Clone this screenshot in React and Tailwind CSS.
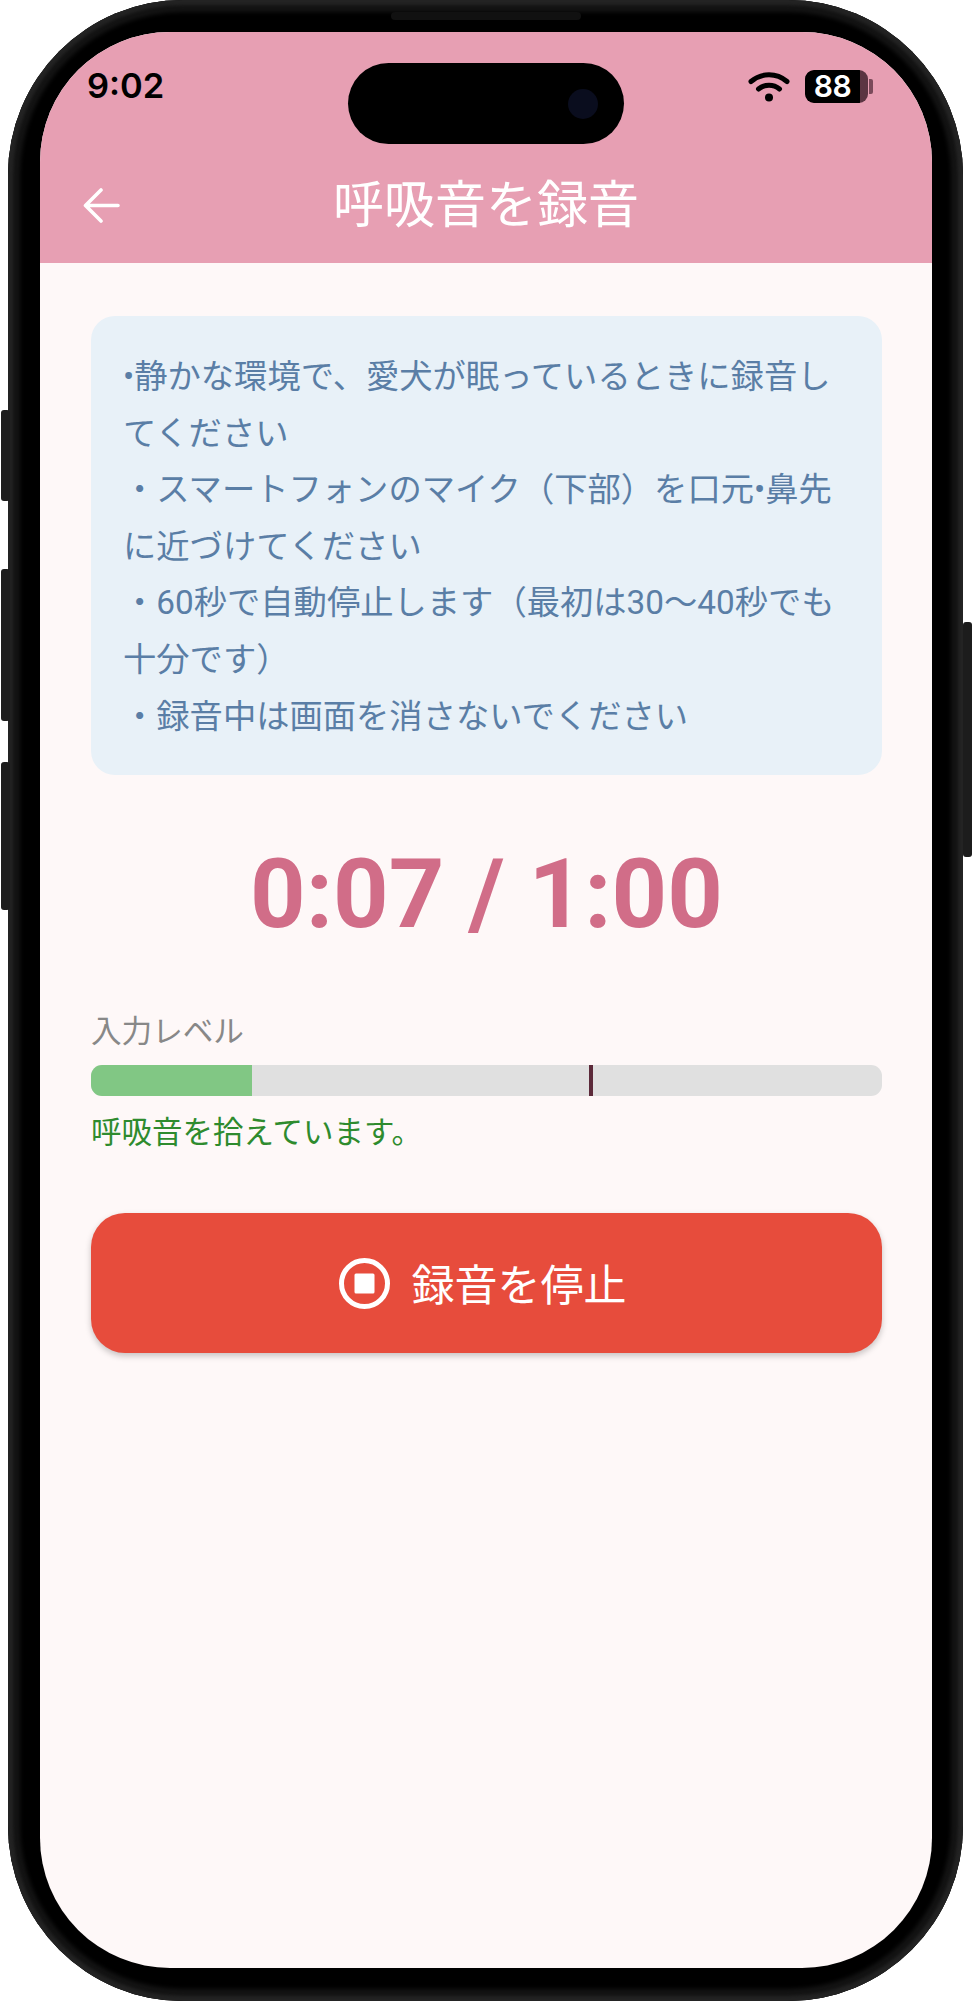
const JP = 'font-["Roboto","Noto_Sans_CJK_JP",sans-serif]';

const TIPS = [
  '•静かな環境で、愛犬が眠っているときに録音してください',
  '・スマートフォンのマイク（下部）を口元•鼻先に近づけてください',
  '・60秒で自動停止します（最初は30～40秒でも十分です）',
  '・録音中は画面を消さないでください',
];

const SideButton = ({ className }) => (
  <div className={`absolute w-[9px] rounded-[3px] bg-[#1c1c1c] ${className}`} />
);

const Wifi = () => (
  <svg width="42" height="31" viewBox="0 0 42 31" fill="none" stroke="#000" strokeLinecap="round">
    <path d="M3 10.5C13.5 1.5 28.5 1.5 39 10.5" strokeWidth="5" />
    <path d="M10.5 18C16.5 13 25.5 13 31.5 18" strokeWidth="5" />
    <circle cx="21" cy="26.5" r="4" fill="#000" stroke="none" />
  </svg>
);

const Battery = () => (
  <div className="flex items-center">
    <div className="flex h-[33px] w-[63px] items-center overflow-hidden rounded-[9px] bg-[#5b3542]">
      <div className="flex h-full w-[55px] items-center justify-center rounded-l-[9px] bg-black font-['Inter',sans-serif] text-[30px] font-semibold leading-none tracking-[-0.5px] text-white">
        88
      </div>
    </div>
    <div className="ml-[1px] h-[15px] w-[4px] rounded-r-[2px] bg-[#7a4a5a]" />
  </div>
);

const BackArrow = () => (
  <svg width="37" height="35" viewBox="0 0 37 35" fill="none" stroke="#fff" strokeWidth="3.6" strokeLinecap="round" strokeLinejoin="round">
    <path d="M35 17.5H3M18 2L2.5 17.5L18 33" />
  </svg>
);

const StopIcon = () => (
  <svg width="51" height="51" viewBox="0 0 51 51" fill="none">
    <circle cx="25.5" cy="25.5" r="23" stroke="#fff" strokeWidth="5" />
    <rect x="15.5" y="15.5" width="20" height="20" rx="1.5" fill="#fff" />
  </svg>
);

export default function App() {
  return (
    <div className={`h-[2003px] w-[973px] overflow-hidden bg-white pl-[8px] ${JP}`}>
      <div className="relative h-[2001px] w-[955px] rounded-[175px] bg-black pt-[32px] pr-[31px] pb-[33px] pl-[32px] shadow-[inset_0_0_3px_5px_#232323,inset_0_0_4px_12px_#141414]">
        <SideButton className="-left-[7px] top-[410px] h-[91px]" />
        <SideButton className="-left-[7px] top-[569px] h-[152px]" />
        <SideButton className="-left-[7px] top-[762px] h-[148px]" />
        <SideButton className="-right-[9px] top-[622px] h-[235px]" />
        <div className="absolute left-[383px] top-[12px] h-[8px] w-[190px] rounded-full bg-[#111]" />

        <div className="relative flex h-[1936px] flex-col overflow-hidden rounded-[130px] bg-[#fef8f8]">
          <div className="absolute left-[308px] top-[31px] flex h-[81px] w-[276px] items-center justify-end rounded-[42px] bg-black pr-[26px]">
            <div className="h-[30px] w-[30px] rounded-full bg-[#0a0d1e]" />
          </div>

          <header className="h-[231px] bg-[#e79fb3] pt-[36px]">
            <div className="flex h-[36px] items-center justify-between pr-[59px] pl-[47px]">
              <span className="font-['Inter',sans-serif] text-[34.5px] font-semibold leading-none text-black">9:02</span>
              <div className="flex items-center gap-[15px]">
                <Wifi />
                <Battery />
              </div>
            </div>
            <div className="mt-[61px] grid h-[80px] grid-cols-[1fr_auto_1fr] items-center">
              <div className="pl-[43px]">
                <BackArrow />
              </div>
              <h1 className="text-[51px] font-normal leading-none text-white">呼吸音を録音</h1>
              <div />
            </div>
          </header>

          <main className="pt-[53px] pr-[50px] pl-[51px]">
            <div className="rounded-[24px] bg-[#e8f1f8] px-[32px] pt-[33px] pb-[30px] text-[33.3px] leading-[56.6px] text-[#5a7ea6]">
              {TIPS.map((tip) => (
                <p key={tip}>{tip}</p>
              ))}
            </div>

            <p className="mt-[69px] text-center text-[97px] font-bold leading-[100px] text-[#d16d88]">0:07 / 1:00</p>

            <p className="mt-[68px] text-[30.6px] leading-[40px] text-[#888888]">入力レベル</p>
            <div className="relative mt-[13px] h-[31px] overflow-hidden rounded-[11px] bg-[#e0e0e0]">
              <div className="h-full w-[161px] bg-[#81c784]" />
              <div className="absolute left-[498px] top-0 h-full w-[4px] bg-[#5c2a3a]" />
            </div>
            <p className="mt-[17px] text-[30.5px] leading-[40px] text-[#2e8b2e]">呼吸音を拾えています。</p>

            <button className="mt-[60px] flex h-[140px] w-full items-center justify-center gap-[22px] rounded-[34px] bg-[#e74c3c] pr-[8px] text-[43px] text-white shadow-[0_3px_6px_rgba(0,0,0,0.22)]">
              <StopIcon />
              <span className="pt-[6px]">録音を停止</span>
            </button>
          </main>
        </div>
      </div>
    </div>
  );
}
